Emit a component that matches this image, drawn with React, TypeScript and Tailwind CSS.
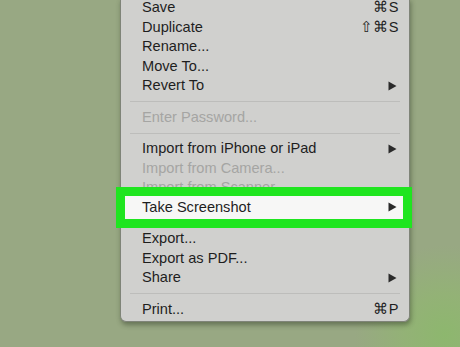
type Item = {
  label: string;
  shortcut?: string;
  submenu?: boolean;
  disabled?: boolean;
  highlight?: boolean;
};

const groups: Item[][] = [
  [
    { label: "Save", shortcut: "⌘S" },
    { label: "Duplicate", shortcut: "⇧⌘S" },
    { label: "Rename..." },
    { label: "Move To..." },
    { label: "Revert To", submenu: true },
  ],
  [{ label: "Enter Password...", disabled: true }],
  [
    { label: "Import from iPhone or iPad", submenu: true },
    { label: "Import from Camera...", disabled: true },
    { label: "Import from Scanner...", disabled: true },
    { label: "Take Screenshot", submenu: true, highlight: true },
  ],
  [
    { label: "Export..." },
    { label: "Export as PDF..." },
    { label: "Share", submenu: true },
  ],
  [{ label: "Print...", shortcut: "⌘P" }],
];

function Arrow() {
  return (
    <svg width="9" height="10" viewBox="0 0 9 10" className="flex-none">
      <path d="M0.5 0.5 L8.5 5 L0.5 9.5 Z" fill="#2a2a2a" />
    </svg>
  );
}

function Row({ item }: { item: Item }) {
  const color = item.disabled ? "text-[#a5a5a3]" : "text-[#1e1e1e]";
  return (
    <div className={`relative flex h-[19.5px] items-center justify-between pl-[21px] pr-[10px] ${color}`}>
      {item.highlight && (
        <div className="absolute -left-[5px] -right-[3px] -top-[11px] -bottom-[11px] border-[9px] border-[#1fe51f] bg-[#f7f7f6]" />
      )}
      <span className="relative">{item.label}</span>
      {item.shortcut && <span className="relative tracking-[0.5px]">{item.shortcut}</span>}
      {item.submenu && (
        <span className="relative mr-[2px]">
          <Arrow />
        </span>
      )}
    </div>
  );
}

export default function App() {
  return (
    <div className="h-[347px] w-[460px] overflow-hidden bg-[#98a883] bg-[radial-gradient(circle_at_445px_335px,#8db76e_0px,#93b276_40px,rgba(152,168,131,0)_90px)] pl-[120px] font-['Liberation_Sans',Arial,sans-serif] text-[14.6px] leading-none">
      <div className="-mt-[2px] w-[290px] rounded-b-[6px] border border-t-0 border-[#7f8478] bg-[#d0d0ce] pb-[2px] shadow-[1px_3px_5px_rgba(40,50,30,0.45)]">
        {groups.map((g, gi) => (
          <div key={gi}>
            {gi > 0 && (
              <div className="flex h-[12px] items-center px-[9px]">
                <div className="h-[1px] w-full bg-[#bdbdbb]" />
              </div>
            )}
            {g.map((item) => (
              <Row key={item.label} item={item} />
            ))}
          </div>
        ))}
      </div>
    </div>
  );
}
